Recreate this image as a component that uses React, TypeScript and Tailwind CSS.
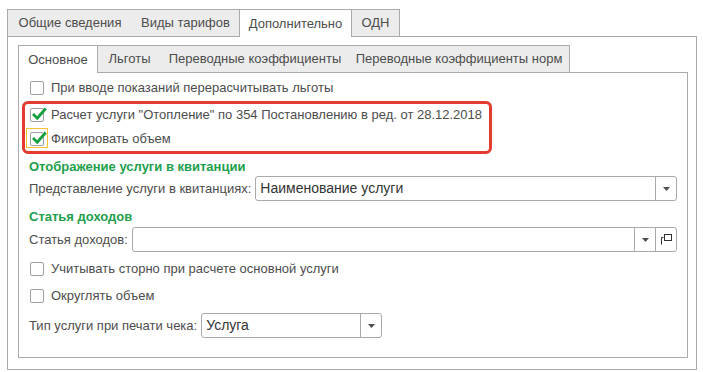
import React from "react";

const Tri = () => (
  <svg width="7" height="4" viewBox="0 0 7 4"><path d="M0 0H7L3.5 4Z" fill="#4d4d4d" /></svg>
);

const Check = ({ checked }: { checked?: boolean }) => (
  <div className="w-[14px] h-[14px] border border-[#a0a0a0] rounded-[2px] bg-white flex items-center justify-center shrink-0 relative">
    {checked && (
      <svg width="16" height="16" viewBox="0 0 16 16" className="absolute left-[0px] -top-[3px]">
        <path d="M3 9L6.3 12.2L13.8 3.6" fill="none" stroke="#14a03c" strokeWidth="2.8" strokeLinecap="square" />
      </svg>
    )}
  </div>
);

function OuterTab({ label, w, active, first, last }: { label: string; w: string; active?: boolean; first?: boolean; last?: boolean }) {
  return (
    <div
      className={`${w} h-[27px] border-t border-[#ababab] ${first || active ? "border-l" : ""} ${last || active ? "border-r" : ""} ${active ? "bg-white relative z-10 h-[28px] -mb-px" : "bg-[#ececec]"} flex items-center justify-center`}
    >
      {label}
    </div>
  );
}

function Combo({ text, w, open }: { text?: string; w: string; open?: boolean }) {
  return (
    <div className={`${w} h-[25px] border border-[#a9a9a9] rounded-[3px] bg-white flex items-stretch`}>
      <div className="flex-1 px-[4px] flex items-center text-[#333] text-[14px]">{text}</div>
      <div className="w-[21px] border-l border-[#a9a9a9] flex items-center justify-center">
        <Tri />
      </div>
      {open && (
        <div className="w-[21px] border-l border-[#a9a9a9] flex items-center justify-center">
          <svg width="11" height="11" viewBox="0 0 11 11">
            <rect x="3.5" y="0.5" width="7" height="6" fill="none" stroke="#333" strokeWidth="1" />
            <path d="M2.5 3.5H0.5V10.5" fill="none" stroke="#333" strokeWidth="1" />
          </svg>
        </div>
      )}
    </div>
  );
}

export default function App() {
  return (
    <div className="w-[703px] h-[372px] bg-white pl-[7px] pt-[9px] font-['Liberation_Sans',Arial,sans-serif] text-[13px] text-[#4d4d4d] overflow-hidden">
      <div className="flex h-[27px] items-start">
        <OuterTab label="Общие сведения" w="w-[125px]" first />
        <OuterTab label="Виды тарифов" w="w-[107px]" />
        <OuterTab label="Дополнительно" w="w-[113px]" active />
        <OuterTab label="ОДН" w="w-[48px]" last />
      </div>
      <div className="w-[690px] h-[334px] border border-[#ababab] px-[10px] pt-[8px]">
        <div className="flex h-[27px] items-start">
          <OuterTab label="Основное" w="w-[80px]" active />
          <OuterTab label="Льготы" w="w-[63px]" />
          <OuterTab label="Переводные коэффициенты" w="w-[188px]" />
          <OuterTab label="Переводные коэффициенты норм" w="w-[221px]" last />
        </div>
        <div className="relative w-[670px] h-[286px] border border-[#ababab] pl-[11px] pr-[10px] pt-[5px] flex flex-col">
          <div className="h-[20px] flex items-center gap-[7px]">
            <Check />
            <span>При вводе показаний перерасчитывать льготы</span>
          </div>
          <div className="h-[20px] mt-[7px] flex items-center gap-[7px]">
            <Check checked />
            <span>Расчет услуги "Отопление" по 354 Постановлению в ред. от 28.12.2018</span>
          </div>
          <div className="h-[20px] mt-[4px] flex items-center gap-[7px] relative">
            <div className="absolute -left-[4px] -top-[1px] w-[22px] h-[20px] border border-[#f2c230]" />
            <Check checked />
            <span>Фиксировать объем</span>
          </div>
          <div className="h-[18px] mt-[9px] -ml-[1px] flex items-center font-bold text-[#22a04b]">Отображение услуги в квитанции</div>
          <div className="h-[25px] -ml-[1px] flex items-center gap-[4px]">
            <span>Представление услуги в квитанциях:</span>
            <Combo text="Наименование услуги" w="flex-1" />
          </div>
          <div className="h-[18px] mt-[7px] -ml-[1px] flex items-center font-bold text-[#22a04b]">Статья доходов</div>
          <div className="h-[25px] mt-[1px] -ml-[1px] flex items-center gap-[4px]">
            <span>Статья доходов:</span>
            <Combo w="flex-1" open />
          </div>
          <div className="h-[20px] mt-[7px] flex items-center gap-[7px]">
            <Check />
            <span>Учитывать сторно при расчете основной услуги</span>
          </div>
          <div className="h-[20px] mt-[7px] flex items-center gap-[7px]">
            <Check />
            <span>Округлять объем</span>
          </div>
          <div className="h-[25px] mt-[7px] -ml-[1px] flex items-center gap-[4px]">
            <span>Тип услуги при печати чека:</span>
            <Combo text="Услуга" w="w-[181px]" />
          </div>
          <div className="absolute left-[3px] top-[28px] w-[470px] h-[53px] border-[3px] border-[#e53a2f] rounded-[6px] pointer-events-none" />
        </div>
      </div>
    </div>
  );
}
